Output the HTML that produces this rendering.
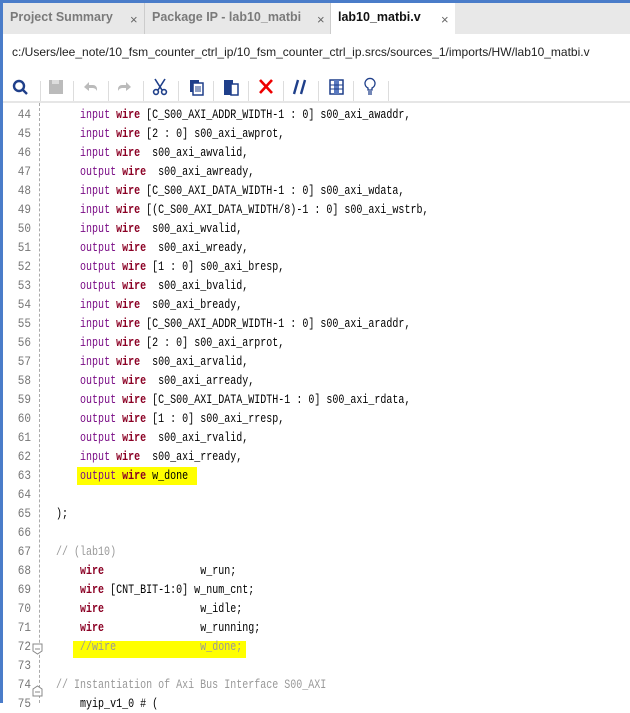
<!DOCTYPE html>
<html><head><meta charset="utf-8"><style>
*{margin:0;padding:0;box-sizing:border-box}
body{width:630px;height:703px;overflow:hidden;background:#fff;position:relative;font-family:"Liberation Sans",sans-serif}
.blue{position:absolute;background:#4a7cc9}
.tabs{position:absolute;left:3px;top:3px;width:627px;height:31px;background:#e8e8e8}
.tab{position:absolute;top:0;height:31px;font-size:12.5px;font-weight:bold;color:#7a7a7a;padding:7px 0 0 7px;white-space:nowrap;overflow:hidden}
.tab .x{position:absolute;top:9px;font-weight:normal;font-size:13px;color:#666}
.path{position:absolute;left:12px;top:45px;font-size:12px;color:#222}
.hline{position:absolute;left:3px;top:101px;width:627px;height:2px;background:#e6e6e6}
.ln{position:absolute;left:0;width:31px;text-align:right;font-family:"Liberation Mono",monospace;font-size:13px;color:#777;transform:scaleX(.85);transform-origin:right}
.code{position:absolute;left:56px;font-family:"Liberation Mono",monospace;font-size:13px;line-height:19px;white-space:pre;color:#000;transform:scaleX(.77);transform-origin:left top}
.k{color:#7a0d86}.w{color:#8b0024;font-weight:bold}.c{color:#999}
.dash{position:absolute;left:39px;top:103px;height:600px;border-left:1px dashed #aaa}
.hl{position:absolute;background:#ffff00}
</style></head><body>
<div class="blue" style="left:0;top:0;width:630px;height:3px"></div>
<div class="blue" style="left:0;top:0;width:3px;height:703px"></div>
<div class="tabs">
 <div class="tab" style="left:0;width:142px;border-right:1px solid #ccc">Project Summary<span class="x" style="left:127px">×</span></div>
 <div class="tab" style="left:142px;width:186px;border-right:1px solid #ccc">Package IP - lab10_matbi<span class="x" style="left:172px">×</span></div>
 <div class="tab" style="left:328px;width:124px;background:#fff;color:#111">lab10_matbi.v<span class="x" style="left:110px">×</span></div>
</div>
<div class="path">c:/Users/lee_note/10_fsm_counter_ctrl_ip/10_fsm_counter_ctrl_ip.srcs/sources_1/imports/HW/lab10_matbi.v</div>
<svg style="position:absolute;left:0;top:70px" width="630" height="32">
<g fill="none" stroke="#1f3f8a" stroke-width="2.4"><circle cx="19" cy="16" r="5"/><line x1="23" y1="20" x2="27" y2="24"/></g>
<rect x="40" y="11" width="1" height="20" fill="#ddd"/>
<rect x="49" y="10" width="14" height="14" fill="#bbb"/><rect x="52" y="10" width="7" height="4" fill="#ddd"/>
<rect x="73" y="11" width="1" height="20" fill="#ddd"/>
<path d="M84 17 l5-5 v3 h4 a4 4 0 0 1 4 4 v2 a5 5 0 0 0-4-3 h-4 v3z" fill="#bbb"/>
<rect x="108" y="11" width="1" height="20" fill="#ddd"/>
<path d="M131 17 l-5-5 v3 h-4 a4 4 0 0 0-4 4 v2 a5 5 0 0 1 4-3 h4 v3z" fill="#bbb"/>
<rect x="143" y="11" width="1" height="20" fill="#ddd"/>
<g stroke="#1f3f8a" stroke-width="1.6" fill="none"><path d="M155 9 L162 20 M165 9 L158 20"/><circle cx="156" cy="22" r="2.4"/><circle cx="164" cy="22" r="2.4"/></g>
<rect x="178" y="11" width="1" height="20" fill="#ddd"/>
<rect x="190" y="10" width="9" height="12" fill="#1f3f8a"/><rect x="193" y="13" width="10" height="12" fill="#fff" stroke="#1f3f8a" stroke-width="1.5"/><path d="M195 17h6M195 19h6M195 21h6" stroke="#1f3f8a"/>
<rect x="213" y="11" width="1" height="20" fill="#ddd"/>
<rect x="224" y="10" width="9" height="15" fill="#1f3f8a"/><rect x="231" y="14" width="7" height="11" fill="#fff" stroke="#1f3f8a" stroke-width="1.5"/>
<rect x="248" y="11" width="1" height="20" fill="#ddd"/>
<path d="M260 10 L272 23 M272 10 L260 23" stroke="#e00" stroke-width="2.6"/>
<rect x="283" y="11" width="1" height="20" fill="#ddd"/>
<path d="M298 10 L294 24 M305 10 L301 24" stroke="#1f3f8a" stroke-width="2.4"/>
<rect x="318" y="11" width="1" height="20" fill="#ddd"/>
<rect x="330" y="10" width="13" height="14" fill="#fff" stroke="#1f3f8a" stroke-width="1.5"/><rect x="334" y="10" width="5" height="14" fill="#5a7ac0"/><path d="M330 15h13M330 19h13" stroke="#1f3f8a"/>
<rect x="353" y="11" width="1" height="20" fill="#ddd"/>
<g stroke="#1f3f8a" stroke-width="1.3" fill="none"><path d="M368 20 v-2 a5 5 0 1 1 4 0 v2z"/><path d="M368 22h4M368 24h4"/></g>
<rect x="388" y="11" width="1" height="20" fill="#ddd"/>
</svg>
<div class="hline"></div>
<div class="dash"></div>
<div class="hl" style="left:77px;top:467px;width:120px;height:18px"></div>
<div class="hl" style="left:73px;top:641px;width:173px;height:17px"></div>
<div class="ln" style="top:105px;line-height:19px">44<br>45<br>46<br>47<br>48<br>49<br>50<br>51<br>52<br>53<br>54<br>55<br>56<br>57<br>58<br>59<br>60<br>61<br>62<br>63<br>64<br>65<br>66<br>67<br>68<br>69<br>70<br>71<br>72<br>73<br>74<br>75</div>
<svg style="position:absolute;left:30px;top:640px" width="16" height="60"><g fill="#fff" stroke="#888"><path d="M3 4h9v7l-4.5 3-4.5-3z"/><path d="M3 56h9v-7l-4.5-3-4.5 3z"/></g><path d="M5 9h5M5 52h5" stroke="#888"/></svg>
<div class="code" style="top:105px">    <span class="k">input</span> <span class="w">wire</span> [C_S00_AXI_ADDR_WIDTH-1 : 0] s00_axi_awaddr,
    <span class="k">input</span> <span class="w">wire</span> [2 : 0] s00_axi_awprot,
    <span class="k">input</span> <span class="w">wire</span>  s00_axi_awvalid,
    <span class="k">output</span> <span class="w">wire</span>  s00_axi_awready,
    <span class="k">input</span> <span class="w">wire</span> [C_S00_AXI_DATA_WIDTH-1 : 0] s00_axi_wdata,
    <span class="k">input</span> <span class="w">wire</span> [(C_S00_AXI_DATA_WIDTH/8)-1 : 0] s00_axi_wstrb,
    <span class="k">input</span> <span class="w">wire</span>  s00_axi_wvalid,
    <span class="k">output</span> <span class="w">wire</span>  s00_axi_wready,
    <span class="k">output</span> <span class="w">wire</span> [1 : 0] s00_axi_bresp,
    <span class="k">output</span> <span class="w">wire</span>  s00_axi_bvalid,
    <span class="k">input</span> <span class="w">wire</span>  s00_axi_bready,
    <span class="k">input</span> <span class="w">wire</span> [C_S00_AXI_ADDR_WIDTH-1 : 0] s00_axi_araddr,
    <span class="k">input</span> <span class="w">wire</span> [2 : 0] s00_axi_arprot,
    <span class="k">input</span> <span class="w">wire</span>  s00_axi_arvalid,
    <span class="k">output</span> <span class="w">wire</span>  s00_axi_arready,
    <span class="k">output</span> <span class="w">wire</span> [C_S00_AXI_DATA_WIDTH-1 : 0] s00_axi_rdata,
    <span class="k">output</span> <span class="w">wire</span> [1 : 0] s00_axi_rresp,
    <span class="k">output</span> <span class="w">wire</span>  s00_axi_rvalid,
    <span class="k">input</span> <span class="w">wire</span>  s00_axi_rready,
    <span class="k">output</span> <span class="w">wire</span> w_done

);

<span class="c">// (lab10)</span>
    <span class="w">wire</span>                w_run;
    <span class="w">wire</span> [CNT_BIT-1:0] w_num_cnt;
    <span class="w">wire</span>                w_idle;
    <span class="w">wire</span>                w_running;
    <span class="c">//wire              w_done;</span>

<span class="c">// Instantiation of Axi Bus Interface S00_AXI</span>
    myip_v1_0 # (</div>
</body></html>
